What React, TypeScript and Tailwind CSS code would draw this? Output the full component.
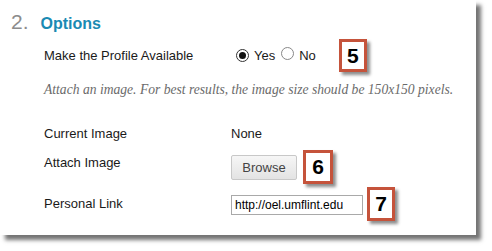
import React from 'react';

const Badge: React.FC<{ n: string; className?: string }> = ({ n, className }) => (
  <div
    className={`flex items-center justify-center border-[3px] border-[#c5533b] bg-white shadow-[3px_3px_3px_rgba(0,0,0,0.45)] font-bold text-[21px] text-black ${className ?? ''}`}
    style={{ fontFamily: '"Liberation Sans", Arial, sans-serif' }}
  >
    {n}
  </div>
);

const Radio: React.FC<{ checked?: boolean }> = ({ checked }) => (
  <span
    className={`inline-flex h-[13px] w-[13px] items-center justify-center rounded-full border bg-white ${
      checked ? 'border-[#333]' : 'border-[#888]'
    }`}
  >
    {checked && <span className="h-[7px] w-[7px] rounded-full bg-[#111]" />}
  </span>
);

export default function App() {
  return (
    <div className="h-[251px] w-[492px] bg-white" style={{ fontFamily: '"Liberation Sans", Arial, sans-serif' }}>
      <div className="relative h-[235px] w-[476px] bg-white shadow-[5px_5px_4px_rgba(0,0,0,0.55)]">
        {/* Header */}
        <div className="flex items-baseline pl-[11px] pt-[6px]">
          <span className="text-[21px] text-[#8c8c8c]">2.</span>
          <span className="ml-[12px] text-[16px] font-bold text-[#1a8ab3]">Options</span>
        </div>

        <div className="pl-[44px] text-[13px] text-[#1a1a1a]">
          {/* Profile available */}
          <div className="mt-[1px] flex h-[34px] items-center">
            <span className="w-[192px]">Make the Profile Available</span>
            <Radio checked />
            <span className="ml-[5px]">Yes</span>
            <span className="ml-[6px]"><Radio /></span>
            <span className="ml-[5px]">No</span>
            <Badge n="5" className="ml-[23px] h-[33px] w-[28px]" />
          </div>

          <div
            className="mt-[7px] text-[13.6px] italic text-[#6a6a6a]"
            style={{ fontFamily: '"Liberation Serif", Georgia, serif' }}
          >
            Attach an image. For best results, the image size should be 150x150 pixels.
          </div>

          <div className="mt-[26px] flex h-[16px] items-center">
            <span className="w-[187px]">Current Image</span>
            <span>None</span>
          </div>

          <div className="mt-[8px] flex items-start">
            <span className="w-[187px] pt-[3px]">Attach Image</span>
            <button className="mt-[5px] h-[25px] w-[66px] rounded-[2px] border border-[#c8c8c8] bg-gradient-to-b from-[#f6f6f6] to-[#e3e3e3] text-[13px] text-[#444]">
              Browse
            </button>
            <Badge n="6" className="ml-[6px] h-[34px] w-[30px]" />
          </div>

          <div className="mt-[3px] flex items-start">
            <span className="w-[187px] pt-[7px]">Personal Link</span>
            <div className="mt-[8px] flex h-[20px] w-[132px] items-center border border-[#a9a9a9] bg-white pl-[3px] text-[12px] text-black">
              http://oel.umflint.edu
            </div>
            <Badge n="7" className="ml-[4px] h-[34px] w-[28px]" />
          </div>
        </div>
      </div>
    </div>
  );
}
